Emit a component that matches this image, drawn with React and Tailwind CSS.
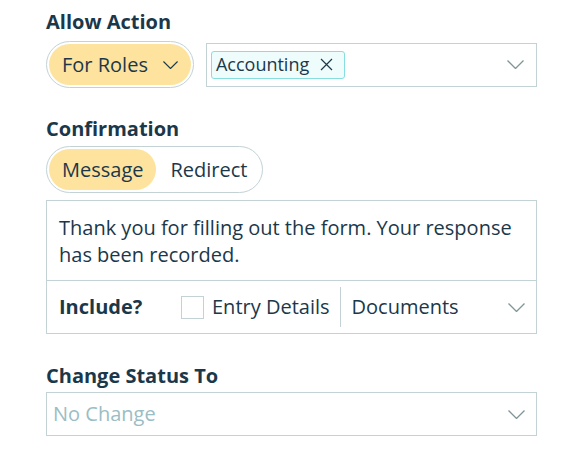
import React from "react";

const Chevron = ({ className = "", color = "#1d3a4b" }) => (
  <svg className={className} viewBox="0 0 17 9" fill="none">
    <path d="M0.5 0.5 L8.5 8.5 L16.5 0.5" stroke={color} strokeWidth="1.3" />
  </svg>
);

export default function App() {
  return (
    <div
      className="w-[581px] h-[457px] bg-white text-[#1b384a]"
      style={{ fontFamily: '"Open Sans", "Noto Sans", sans-serif' }}
    >
      <div className="ml-[46px] w-[491px] pt-[8px]">
        <div className="text-[20px] font-bold leading-[27px]">Allow Action</div>
        <div className="mt-[6px] flex items-center gap-[12px]">
          <div className="rounded-full border border-[#c3d2d5] p-[2px]">
            <div className="flex h-[41px] items-center gap-[15px] rounded-full bg-[#fde39e] px-[13px] text-[20px]">
              <span>For Roles</span>
              <Chevron className="w-[15px] h-[8px]" />
            </div>
          </div>
          <div className="flex h-[44px] flex-1 items-center border border-[#c3d2d5] pl-[4px] pr-[12px]">
            <div className="flex h-[28px] items-center gap-[11px] rounded-[3px] border border-[#86dede] bg-[#effcfc] pl-[4px] pr-[11px] text-[18px]">
              <span>Accounting</span>
              <svg className="w-[13px] h-[13px]" viewBox="0 0 13 13">
                <path d="M1 1 L12 12 M12 1 L1 12" stroke="#1d3a4b" strokeWidth="1.2" />
              </svg>
            </div>
            <div className="flex-1" />
            <Chevron className="w-[17px] h-[9px]" color="#7f9597" />
          </div>
        </div>

        <div className="mt-[27px] text-[20px] font-bold leading-[27px]">Confirmation</div>
        <div className="mt-[4px] flex w-fit rounded-full border border-[#c3d2d5] p-[2px] text-[20px]">
          <div className="flex h-[41px] items-center rounded-full bg-[#fde39e] px-[13px]">Message</div>
          <div className="flex h-[41px] items-center pl-[14px] pr-[13px]">Redirect</div>
        </div>

        <div className="mt-[7px] border border-[#c3d2d5]">
          <div className="px-[12px] pt-[13px] pb-[12px] text-[20px] leading-[27px]">
            Thank you for filling out the form. Your response has been recorded.
          </div>
          <div className="flex h-[53px] items-center border-t border-[#c3d2d5] pl-[12px] pr-[11px] text-[20px]">
            <span className="w-[122px] font-bold">Include?</span>
            <span className="h-[23px] w-[23px] border border-[#c3d2d5]" />
            <span className="ml-[8px]">Entry Details</span>
            <span className="ml-[10px] mr-[11px] h-[40px] w-px bg-[#c3d2d5]" />
            <span>Documents</span>
            <div className="flex-1" />
            <Chevron className="w-[17px] h-[9px]" color="#7f9597" />
          </div>
        </div>

        <div className="mt-[28px] text-[20px] font-bold leading-[27px]">Change Status To</div>
        <div className="mt-[3px] flex h-[44px] items-center border border-[#c3d2d5] pl-[6px] pr-[11px] text-[20px] text-[#9bbdc4]">
          <span>No Change</span>
          <div className="flex-1" />
          <Chevron className="w-[17px] h-[9px]" color="#7f9597" />
        </div>
      </div>
    </div>
  );
}
